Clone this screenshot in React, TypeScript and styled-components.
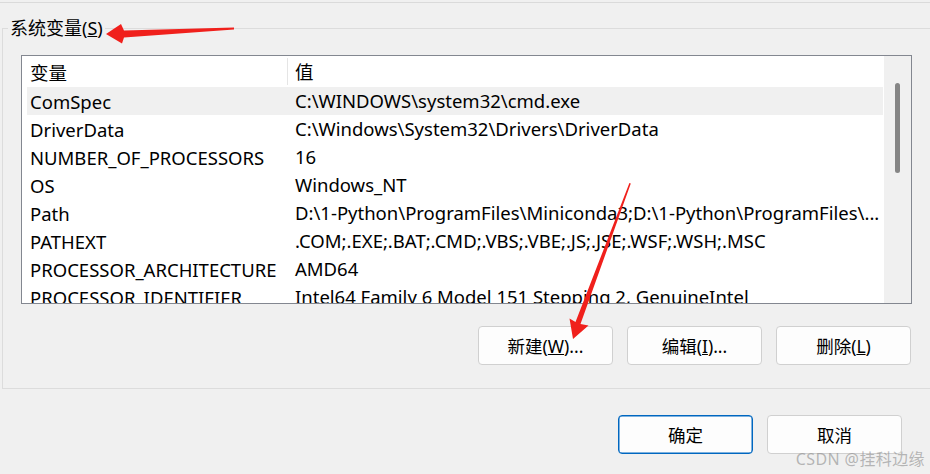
import React from 'react';
import styled, { createGlobalStyle } from 'styled-components';

const GlobalStyle = createGlobalStyle`
  html, body {
    margin: 0;
    padding: 0;
    background: #f0f0f0;
  }
  body {
    font-family: 'Noto Sans', 'Noto Sans CJK SC', sans-serif;
    color: #000;
  }
  * {
    box-sizing: border-box;
  }
`;

const Page = styled.div`
  position: relative;
  width: 930px;
  height: 474px;
  overflow: hidden;
  padding-top: 2px;
  background: #f0f0f0;
`;

const TopRule = styled.div`
  height: 1px;
  background: #dadada;
`;

const GroupBox = styled.fieldset`
  margin: 13px 0 0 2px;
  padding: 0;
  width: 960px;
  border: 1px solid #dcdcdc;
  min-inline-size: 0;
`;

const GroupLabel = styled.legend`
  margin-left: 5px;
  padding: 0 2px;
  font-size: 18px;
  line-height: 24px;
`;

const GroupBody = styled.div`
  padding: 15px 0 23px 18px;
  width: 913px;
`;

const ListBox = styled.div`
  display: flex;
  width: 891px;
  height: 249px;
  border: 1px solid #838790;
  background: #fff;
`;

const Table = styled.div`
  flex: 1;
  padding-left: 5px;
  overflow: hidden;
  font-size: 18.5px;
`;

const HeaderRow = styled.div`
  display: flex;
  height: 31px;
  padding: 2px 0;
  background: #fff;
`;

const Row = styled.div<{ selected?: boolean }>`
  display: flex;
  height: 28px;
  background: ${({ selected }) => (selected ? '#f0f0f0' : '#fff')};
`;

const NameCell = styled.div<{ header?: boolean }>`
  display: flex;
  align-items: center;
  flex: 0 0 261px;
  padding-left: 3px;
  white-space: nowrap;
  overflow: hidden;
  border-right: 1px solid ${({ header }) => (header ? '#e5e5e5' : 'transparent')};
`;

const ValueCell = styled.div`
  flex: 1;
  min-width: 0;
  padding-left: 7px;
  line-height: 28px;
  height: 100%;
  white-space: nowrap;
  overflow: hidden;
  text-overflow: ellipsis;
`;

const HeaderValue = styled(ValueCell)`
  line-height: 27px;
`;

const Scrollbar = styled.div`
  flex: 0 0 28px;
  padding: 27px 0 0 11px;
  border-left: 1px solid #fff;
  background: #f0f0f0;
`;

const Thumb = styled.div`
  width: 5px;
  height: 90px;
  border-radius: 3px;
  background: #858585;
`;

const ButtonRow = styled.div`
  display: flex;
  justify-content: flex-end;
  gap: 14px;
  width: 890px;
  margin-top: 22px;
`;

const Button = styled.button<{ primary?: boolean }>`
  width: 135px;
  height: 39px;
  padding: 0;
  border: 1px solid ${({ primary }) => (primary ? '#0067c0' : '#d0d0d0')};
  box-shadow: ${({ primary }) => (primary ? 'inset 0 0 0 0.5px #0067c0' : 'none')};
  border-radius: 4px;
  background: #fdfdfd;
  font-family: 'Noto Sans', 'Noto Sans CJK SC', sans-serif;
  font-size: 17.5px;
  color: #000;
`;

const Footer = styled.div`
  display: flex;
  justify-content: flex-end;
  gap: 14px;
  padding-right: 28px;
  margin-top: 26px;
`;

const Watermark = styled.div`
  position: absolute;
  right: 5px;
  bottom: 4px;
  font-size: 16px;
  letter-spacing: 0.4px;
  color: rgba(140, 140, 140, 0.6);
  pointer-events: none;
`;

const Overlay = styled.svg`
  position: absolute;
  left: 0;
  top: 0;
  pointer-events: none;
`;

const vars = [
  ['ComSpec', 'C:\\WINDOWS\\system32\\cmd.exe'],
  ['DriverData', 'C:\\Windows\\System32\\Drivers\\DriverData'],
  ['NUMBER_OF_PROCESSORS', '16'],
  ['OS', 'Windows_NT'],
  ['Path', 'D:\\1-Python\\ProgramFiles\\Miniconda3;D:\\1-Python\\ProgramFiles\\...'],
  ['PATHEXT', '.COM;.EXE;.BAT;.CMD;.VBS;.VBE;.JS;.JSE;.WSF;.WSH;.MSC'],
  ['PROCESSOR_ARCHITECTURE', 'AMD64'],
  ['PROCESSOR_IDENTIFIER', 'Intel64 Family 6 Model 151 Stepping 2, GenuineIntel'],
];

export default function App() {
  return (
    <Page>
      <GlobalStyle />
      <TopRule />
      <GroupBox>
        <GroupLabel>
          系统变量(<u>S</u>)
        </GroupLabel>
        <GroupBody>
          <ListBox>
            <Table>
              <HeaderRow>
                <NameCell header>变量</NameCell>
                <HeaderValue>值</HeaderValue>
              </HeaderRow>
              {vars.map(([name, value], i) => (
                <Row key={name} selected={i === 0}>
                  <NameCell>{name}</NameCell>
                  <ValueCell>{value}</ValueCell>
                </Row>
              ))}
            </Table>
            <Scrollbar>
              <Thumb />
            </Scrollbar>
          </ListBox>
          <ButtonRow>
            <Button>
              新建(<u>W</u>)...
            </Button>
            <Button>
              编辑(<u>I</u>)...
            </Button>
            <Button>
              删除(<u>L</u>)
            </Button>
          </ButtonRow>
        </GroupBody>
      </GroupBox>
      <Footer>
        <Button primary>确定</Button>
        <Button>取消</Button>
      </Footer>
      <Watermark>CSDN @挂科边缘</Watermark>
      <Overlay width="930" height="474" viewBox="0 0 930 474">
        {/* arrow to the group label */}
        <polygon
          fill="#f0201c"
          points="106,34 121,24 124,30.5 234,27.6 234,29.4 124,37.5 122,43.5"
        />
        {/* arrow to the New button */}
        <polygon
          fill="#f0201c"
          points="573,339 569.5,318.5 575.5,322 629.4,183 630.8,183.5 580.5,324 588.5,325.5"
        />
      </Overlay>
    </Page>
  );
}
